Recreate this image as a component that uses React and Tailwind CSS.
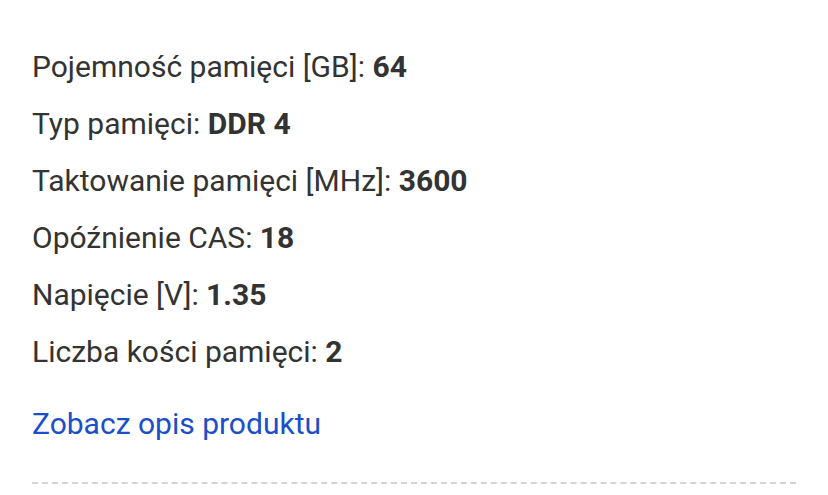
const specs = [
  ['Pojemność pamięci [GB]:', '64'],
  ['Typ pamięci:', 'DDR 4'],
  ['Taktowanie pamięci [MHz]:', '3600'],
  ['Opóźnienie CAS:', '18'],
  ['Napięcie [V]:', '1.35'],
  ['Liczba kości pamięci:', '2'],
]

export default function App() {
  return (
    <div className="w-[828px] h-[495px] bg-white overflow-hidden" style={{ fontFamily: 'Roboto, "Liberation Sans", sans-serif' }}>
      <div className="pt-[38px] pl-[32px] pr-[32px]">
        <ul className="flex flex-col">
          {specs.map(([label, value]) => (
            <li key={label} className="h-[57px] leading-[57px] text-[30px] text-[#333333]">
              {label} <span className="font-bold">{value}</span>
            </li>
          ))}
        </ul>
        <a href="#" className="block mt-[15px] h-[57px] leading-[57px] text-[30px] text-[#1a4fc9]">
          Zobacz opis produktu
        </a>
        <div className="mt-[30px] border-t-2 border-dashed border-[#d4d4d4]" />
      </div>
    </div>
  )
}
